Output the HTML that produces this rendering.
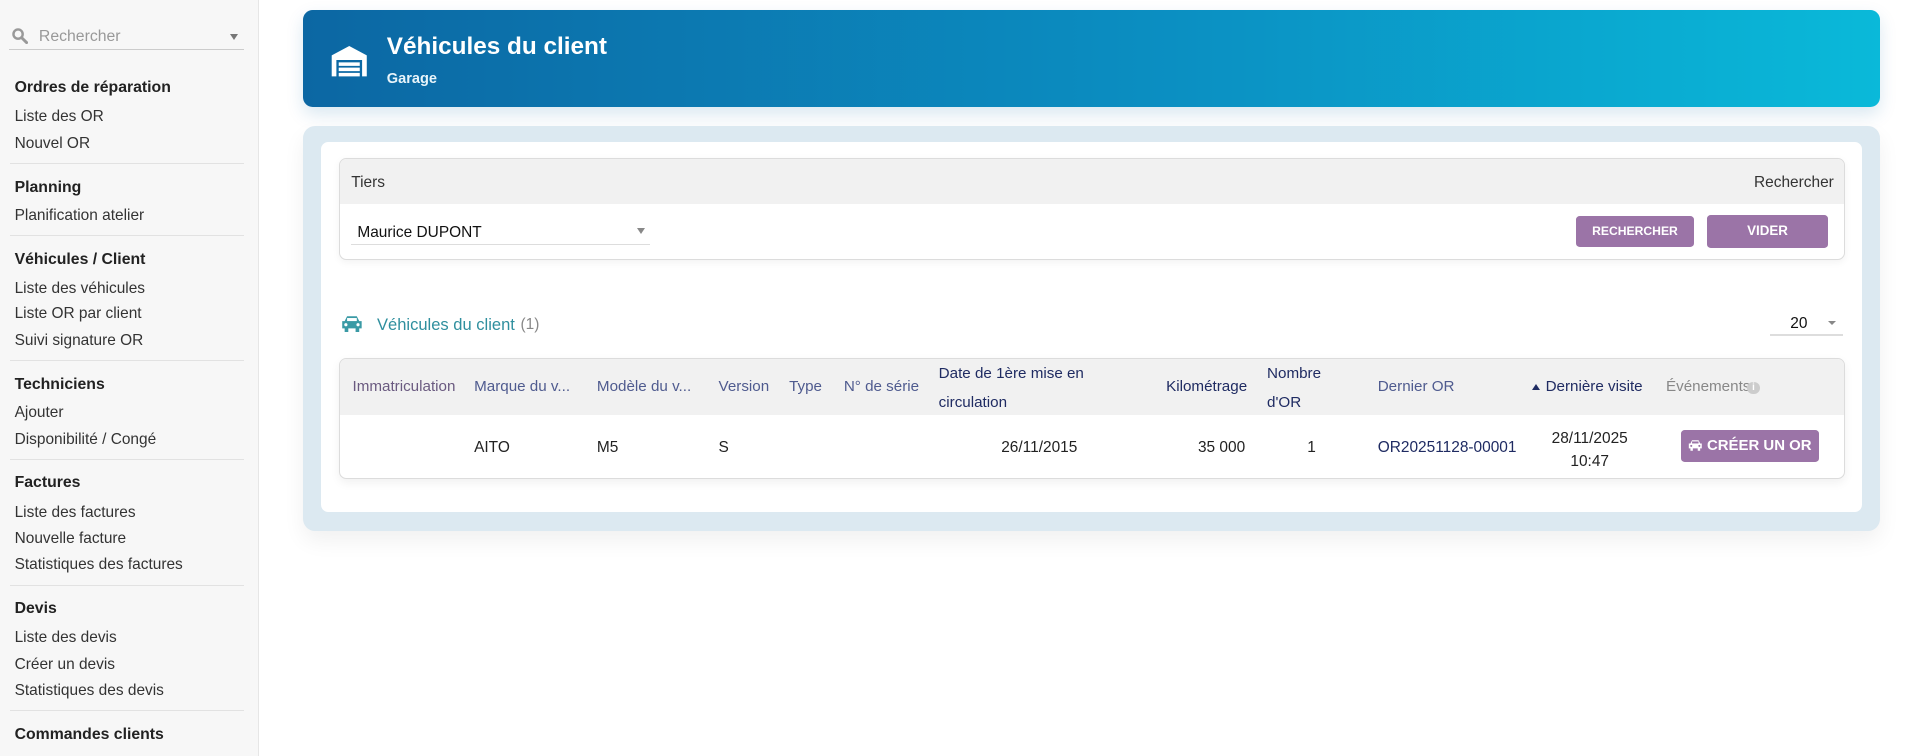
<!DOCTYPE html>
<html><head><meta charset="utf-8">
<style>
html,body{margin:0;padding:0;width:1907px;height:756px;overflow:hidden;background:#fff;font-family:"Liberation Sans",Arial,sans-serif;}
#w{position:absolute;left:0;top:0;width:1568px;height:622px;zoom:1.21620;}
.a{position:absolute;white-space:nowrap;}
#side{position:absolute;left:0;top:0;width:212px;height:622px;background:#f7f7f7;border-right:1px solid #e6e6e6;}
.h{font-weight:bold;font-size:13px;color:#222;left:12px;}
.i{font-size:12.7px;color:#333;left:12px;}
.sep{position:absolute;left:8px;width:193px;height:1px;background:#e2e2e2;}
.th{font-size:12.5px;color:#4f5b8f;line-height:24px;}
.thd{color:#1f2b62;}
.td{font-size:12.7px;color:#222;}
.btn{position:absolute;background:#9b74a7;color:#fff;font-weight:bold;border-radius:3px;text-align:center;}
</style></head><body><div id="w">
<div id="side">
  <svg class="a" style="left:10px;top:23px" width="13" height="13" viewBox="0 0 13 13"><circle cx="5" cy="5" r="3.8" fill="none" stroke="#999" stroke-width="2"/><path d="M8 8l4 4" stroke="#999" stroke-width="2.4" stroke-linecap="round"/></svg>
  <div class="a" style="left:32px;top:23px;font-size:13px;color:#999">Rechercher</div>
  <div class="a" style="left:189px;top:28px;width:0;height:0;border-left:4px solid transparent;border-right:4px solid transparent;border-top:5px solid #777"></div>
  <div class="a" style="left:7px;top:40px;width:194px;height:1px;background:#ccc"></div>
  <div class="a h" style="top:65px">Ordres de réparation</div>
  <div class="a i" style="top:89px">Liste des OR</div>
  <div class="a i" style="top:111px">Nouvel OR</div>
  <div class="sep" style="top:134px"></div>
  <div class="a h" style="top:147px">Planning</div>
  <div class="a i" style="top:170px">Planification atelier</div>
  <div class="sep" style="top:193px"></div>
  <div class="a h" style="top:206px">Véhicules / Client</div>
  <div class="a i" style="top:230px">Liste des véhicules</div>
  <div class="a i" style="top:251px">Liste OR par client</div>
  <div class="a i" style="top:273px">Suivi signature OR</div>
  <div class="sep" style="top:296px"></div>
  <div class="a h" style="top:309px">Techniciens</div>
  <div class="a i" style="top:332px">Ajouter</div>
  <div class="a i" style="top:354px">Disponibilité / Congé</div>
  <div class="sep" style="top:377px"></div>
  <div class="a h" style="top:390px">Factures</div>
  <div class="a i" style="top:414px">Liste des factures</div>
  <div class="a i" style="top:436px">Nouvelle facture</div>
  <div class="a i" style="top:457px">Statistiques des factures</div>
  <div class="sep" style="top:481px"></div>
  <div class="a h" style="top:493px">Devis</div>
  <div class="a i" style="top:517px">Liste des devis</div>
  <div class="a i" style="top:539px">Créer un devis</div>
  <div class="a i" style="top:561px">Statistiques des devis</div>
  <div class="sep" style="top:584px"></div>
  <div class="a h" style="top:597px">Commandes clients</div>
</div>

<div class="a" style="left:249px;top:8px;width:1297px;height:80px;border-radius:8px;background:linear-gradient(90deg,#0c67a3 0%,#0b8fc2 55%,#0ab9d9 100%);box-shadow:0 6px 14px rgba(10,100,160,0.15)"></div>
<svg class="a" style="left:272px;top:38px" width="30" height="25" viewBox="0 0 30 26"><path d="M0 8L15 0L30 8V26H26V12H4V26H0Z" fill="#fff"/><rect x="6" y="14" width="18" height="3" fill="#fff"/><rect x="6" y="18.5" width="18" height="3" fill="#fff"/><rect x="6" y="23" width="18" height="3" fill="#fff"/></svg>
<div class="a" style="left:318px;top:27px;font-size:20px;font-weight:bold;color:#fff">Véhicules du client</div>
<div class="a" style="left:318px;top:58px;font-size:12px;font-weight:bold;color:#e8f4fa">Garage</div>

<div class="a" style="left:249px;top:104px;width:1297px;height:333px;border-radius:10px;background:#dce9f1;box-shadow:0 8px 18px rgba(0,0,0,0.06)"></div>
<div class="a" style="left:264px;top:117px;width:1267px;height:304px;border-radius:6px;background:#fff"></div>

<div class="a" style="left:279px;top:130px;width:1236px;height:82px;border:1px solid #dcdcdc;border-radius:6px;overflow:hidden;background:#fff;box-shadow:0 2px 6px rgba(0,0,0,0.05)">
  <div class="a" style="left:0;top:0;width:100%;height:37px;background:#f1f1f1"></div>
  <div class="a" style="left:9px;top:12px;font-size:12.7px;color:#333">Tiers</div>
  <div class="a" style="right:8px;top:12px;font-size:12.7px;color:#333">Rechercher</div>
  <div class="a" style="left:14px;top:53px;font-size:12.7px;color:#111">Maurice DUPONT</div>
  <div class="a" style="left:244px;top:57px;width:0;height:0;border-left:4px solid transparent;border-right:4px solid transparent;border-top:5px solid #888"></div>
  <div class="a" style="left:9px;top:70px;width:246px;height:1px;background:#ddd"></div>
  <div class="btn" style="left:1016px;top:47px;width:97px;height:25px;line-height:25px;font-size:10px">RECHERCHER</div>
  <div class="btn" style="left:1124px;top:46px;width:99px;height:27px;line-height:27px;font-size:11px">VIDER</div>
</div>

<svg class="a" style="left:280px;top:259px" width="18" height="14" viewBox="0 0 18 14"><path d="M3 5L5 1H13L15 5H17V11H15V14H12V11H6V14H3V11H1V5Z" fill="#3a9aa5"/><rect x="5" y="2.5" width="8" height="2.5" fill="#fff"/><circle cx="4" cy="8" r="1.3" fill="#fff"/><circle cx="14" cy="8" r="1.3" fill="#fff"/></svg>
<div class="a" style="left:310px;top:259px;font-size:13.6px;color:#2f8f9e">Véhicules du client</div>
<div class="a" style="left:428px;top:260px;font-size:12.7px;color:#888">(1)</div>
<div class="a" style="left:1472px;top:259px;font-size:12.7px;color:#111">20</div>
<div class="a" style="left:1503px;top:264px;width:0;height:0;border-left:3.5px solid transparent;border-right:3.5px solid transparent;border-top:4px solid #888"></div>
<div class="a" style="left:1455px;top:275px;width:60px;height:1px;background:#ddd"></div>

<div class="a" style="left:279px;top:294px;width:1236px;height:98px;border:1px solid #dcdcdc;border-radius:6px;overflow:hidden;background:#fff;box-shadow:0 3px 8px rgba(0,0,0,0.06)">
  <div class="a" style="left:0;top:0;width:100%;height:46px;background:#f1f1f1"></div>
  <div class="a th" style="left:10px;top:11px;color:#6a5a80">Immatriculation</div>
  <div class="a th" style="left:110px;top:11px">Marque du v...</div>
  <div class="a th" style="left:211px;top:11px">Modèle du v...</div>
  <div class="a th" style="left:311px;top:11px">Version</div>
  <div class="a th" style="left:369px;top:11px">Type</div>
  <div class="a th" style="left:414px;top:11px">N° de série</div>
  <div class="a th thd" style="left:492px;top:0px">Date de 1ère mise en<br>circulation</div>
  <div class="a th thd" style="left:679px;top:11px">Kilométrage</div>
  <div class="a th thd" style="left:762px;top:0px">Nombre<br>d'OR</div>
  <div class="a th" style="left:853px;top:11px">Dernier OR</div>
  <div class="a" style="left:980px;top:21px;width:0;height:0;border-left:3.5px solid transparent;border-right:3.5px solid transparent;border-bottom:5px solid #1f2b62"></div>
  <div class="a th thd" style="left:991px;top:11px">Dernière visite</div>
  <div class="a th" style="left:1090px;top:11px;color:#888">Événements</div>
  <div class="a" style="left:1157px;top:19px;width:10px;height:10px;border-radius:5px;background:#ccc;color:#fff;font-size:8px;line-height:10px;text-align:center;font-weight:bold">i</div>

  <div class="a td" style="left:110px;top:66px">AITO</div>
  <div class="a td" style="left:211px;top:66px">M5</div>
  <div class="a td" style="left:311px;top:66px">S</div>
  <div class="a td" style="right:630px;top:66px">26/11/2015</div>
  <div class="a td" style="right:492px;top:66px">35 000</div>
  <div class="a td" style="left:795px;top:66px">1</div>
  <div class="a td" style="left:853px;top:66px;color:#1f2b62">OR20251128-00001</div>
  <div class="a td" style="left:996px;top:56px;line-height:19px;text-align:center">28/11/2025<br>10:47</div>
  <div class="btn" style="left:1102px;top:59px;width:114px;height:26px;line-height:26px;font-size:12.3px"><svg style="vertical-align:-1px" width="12" height="10" viewBox="0 0 18 14"><path d="M3 5L5 1H13L15 5H17V11H15V14H12V11H6V14H3V11H1V5Z" fill="#fff"/><rect x="5" y="2.5" width="8" height="2.5" fill="#9b74a7"/><circle cx="4" cy="8" r="1.3" fill="#9b74a7"/><circle cx="14" cy="8" r="1.3" fill="#9b74a7"/></svg> CRÉER UN OR</div>
</div>
</div></body></html>
